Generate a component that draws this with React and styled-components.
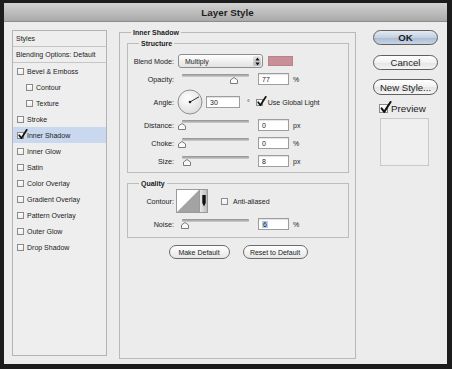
import React from 'react';
import styled, { createGlobalStyle } from 'styled-components';

const GlobalStyle = createGlobalStyle`
  html, body {
    margin: 0;
    padding: 0;
    background: #1c1c1c;
    overflow: hidden;
  }
  body {
    font-family: "Liberation Sans", Arial, sans-serif;
    color: #222;
  }
`;

const styleItems = [
    { name: 'Bevel & Emboss' },
    { name: 'Contour', indent: true },
    { name: 'Texture', indent: true },
    { name: 'Stroke' },
    { name: 'Inner Shadow', checked: true, active: true },
    { name: 'Inner Glow' },
    { name: 'Satin' },
    { name: 'Color Overlay' },
    { name: 'Gradient Overlay' },
    { name: 'Pattern Overlay' },
    { name: 'Outer Glow' },
    { name: 'Drop Shadow' },
];

function Check({ checked, size = 7 }) {
    return (
        <CheckBox $size={size}>
            {checked && (
                <svg width={size + 4} height={size + 4} viewBox="0 0 11 11">
                    <path d="M2.2 6.2 L4.4 9.2 L9.8 0.8" fill="none" stroke="#111" strokeWidth="1.7" strokeLinecap="round" strokeLinejoin="round" />
                </svg>
            )}
        </CheckBox>
    );
}

function Slider({ value }) {
    return (
        <SliderBox>
            <Track />
            <Thumb style={{ left: `${value * 67}px` }} width="8" height="7" viewBox="0 0 8 7">
                <path d="M0.5 6.5 L0.5 3 L4 0.5 L7.5 3 L7.5 6.5 Z" fill="#fafafa" stroke="#7a7a7a" strokeWidth="1" />
            </Thumb>
        </SliderBox>
    );
}

function SliderRow({ label, value, text, unit, mt, selected }) {
    return (
        <Row $h={16} $mt={mt}>
            <Label>{label}</Label>
            <Slider value={value} />
            <Field $w={31}>{selected ? <Selected>{text}</Selected> : text}</Field>
            <Unit>{unit}</Unit>
        </Row>
    );
}

class App extends React.Component {
    render() {
        return (
            <Frame>
                <GlobalStyle />
                <Window>
                    <TitleBar>Layer Style</TitleBar>
                    <Body>
                        <StyleList>
                            <ListItem $header>Styles</ListItem>
                            <ListItem $header>Blending Options: Default</ListItem>
                            {styleItems.map(item => (
                                <ListItem key={item.name} $indent={item.indent} $active={item.active} $box>
                                    <Check checked={item.checked} />
                                    {item.name}
                                </ListItem>
                            ))}
                        </StyleList>

                        <MainGroup>
                            <Legend $offset={4}>Inner Shadow</Legend>
                            <SubGroup $mt={2}>
                                <Legend $offset={11}>Structure</Legend>
                                <Rows $pt={5} $pb={3}>
                                    <Row $h={16}>
                                        <Label>Blend Mode:</Label>
                                        <Select>
                                            Multiply
                                            <Stepper>
                                                <svg width="5" height="9" viewBox="0 0 5 9">
                                                    <path d="M2.5 0.5 L4.6 3.4 L0.4 3.4 Z M2.5 8.5 L4.6 5.6 L0.4 5.6 Z" fill="#111" />
                                                </svg>
                                            </Stepper>
                                        </Select>
                                        <Swatch />
                                    </Row>
                                    <SliderRow label="Opacity:" value={0.77} text="77" unit="%" mt={2} />
                                    <Row $h={28} $mt={1}>
                                        <Label>Angle:</Label>
                                        <Dial width="26" height="26" viewBox="0 0 26 26">
                                            <defs>
                                                <radialGradient id="dialFill" cx="40%" cy="35%" r="70%">
                                                    <stop offset="0" stopColor="#ffffff" />
                                                    <stop offset="1" stopColor="#dcdcdc" />
                                                </radialGradient>
                                            </defs>
                                            <circle cx="13" cy="13" r="12" fill="url(#dialFill)" stroke="#8e8e8e" strokeWidth="1" />
                                            <line x1="13" y1="13" x2="22" y2="7.8" stroke="#333" strokeWidth="1" />
                                            <circle cx="13" cy="13" r="1.3" fill="#222" />
                                        </Dial>
                                        <Field $w={34}>30</Field>
                                        <Degree>°</Degree>
                                        <Check checked />
                                        <CheckText>Use Global Light</CheckText>
                                    </Row>
                                    <SliderRow label="Distance:" value={0} text="0" unit="px" mt={1} />
                                    <SliderRow label="Choke:" value={0} text="0" unit="%" mt={2} />
                                    <SliderRow label="Size:" value={0.07} text="8" unit="px" mt={2} />
                                </Rows>
                            </SubGroup>

                            <SubGroup $mt={6}>
                                <Legend $offset={11}>Quality</Legend>
                                <Rows $pt={2} $pb={5}>
                                    <Row $h={22}>
                                        <Label>Contour:</Label>
                                        <ContourPicker>
                                            <svg width="22" height="22" viewBox="0 0 22 22">
                                                <rect x="0" y="0" width="22" height="22" fill="#fff" />
                                                <path d="M0 22 L22 0 L22 22 Z" fill="#a3a3a3" />
                                            </svg>
                                            <ContourArrow>
                                                <svg width="4" height="12" viewBox="0 0 4 12">
                                                    <path d="M0.3 0 L3.7 0 L3.7 8 L2 11.5 L0.3 8 Z" fill="#111" />
                                                </svg>
                                            </ContourArrow>
                                        </ContourPicker>
                                        <Check />
                                        <CheckText>Anti-aliased</CheckText>
                                    </Row>
                                    <SliderRow label="Noise:" value={0.05} text="6" unit="%" mt={4} selected />
                                </Rows>
                            </SubGroup>

                            <ButtonRow>
                                <PillButton $w={61}>Make Default</PillButton>
                                <PillButton $w={65}>Reset to Default</PillButton>
                            </ButtonRow>
                        </MainGroup>

                        <Side>
                            <DialogButton $primary>OK</DialogButton>
                            <DialogButton $mt={10}>Cancel</DialogButton>
                            <DialogButton $mt={9} $h={16}>New Style...</DialogButton>
                            <PreviewRow>
                                <Check checked size={9} />
                                Preview
                            </PreviewRow>
                            <PreviewBox />
                        </Side>
                    </Body>
                </Window>
            </Frame>
        );
    }
}

export default App;

const Frame = styled.div`
width: 452px;
height: 369px;
box-sizing: border-box;
padding: 3px 5px 5px 4px;
background: #1c1c1c;
`;

const Window = styled.div`
height: 100%;
display: flex;
flex-direction: column;
background: #ececec;
`;

const TitleBar = styled.div`
height: 19px;
flex: none;
box-sizing: border-box;
display: flex;
align-items: center;
justify-content: center;
padding-left: 4px;
background: linear-gradient(#d2d2d2, #a9a9a9);
border-bottom: 1px solid #8c8c8c;
font-weight: bold;
font-size: 9.8px;
color: #1e1e1e;
`;

const Body = styled.div`
flex: 1;
display: flex;
align-items: flex-start;
padding: 8px 9px 0 8px;
`;

const StyleList = styled.div`
width: 95px;
height: 326px;
flex: none;
box-sizing: border-box;
border: 1px solid #b3b3b3;
background: #eeeeee;
`;

const ListItem = styled.div`
height: 16px;
box-sizing: border-box;
display: flex;
align-items: center;
gap: 3px;
padding-left: ${p => p.$indent ? 13 : p.$box ? 4 : 3}px;
background: ${p => p.$active ? '#c9d8ee' : 'transparent'};
border-bottom: ${p => p.$header ? '1px solid #c6c6c6' : 'none'};
font-size: 7px;
color: #222;
white-space: nowrap;
`;

const CheckBox = styled.span`
position: relative;
flex: none;
width: ${p => p.$size}px;
height: ${p => p.$size}px;
box-sizing: border-box;
border: 1px solid #8a8a8a;
background: linear-gradient(#ffffff, #ececec);

svg {
    position: absolute;
    left: -1px;
    top: -4px;
    overflow: visible;
}
`;

const MainGroup = styled.fieldset`
width: 237px;
height: 331px;
margin: -2px 0 0 12px;
padding: 0 6px 0 7px;
min-width: 0;
box-sizing: border-box;
border: 1px solid #b9b9b9;
display: flex;
flex-direction: column;
flex: none;
`;

const SubGroup = styled.fieldset`
margin: ${p => p.$mt}px 0 0 0;
padding: 0;
min-width: 0;
border: 1px solid #bcbcbc;
`;

const Legend = styled.legend`
font-weight: bold;
font-size: 7px;
line-height: 9px;
padding: 0 2px;
margin-left: ${p => p.$offset}px;
color: #222;
`;

const Rows = styled.div`
display: flex;
flex-direction: column;
padding: ${p => p.$pt}px 0 ${p => p.$pb}px 0;
`;

const Row = styled.div`
display: flex;
align-items: center;
height: ${p => p.$h}px;
margin-top: ${p => p.$mt || 0}px;
font-size: 7px;
`;

const Label = styled.span`
width: 46px;
margin-right: 4px;
flex: none;
text-align: right;
font-size: 7.2px;
color: #222;
`;

const Select = styled.div`
width: 85px;
height: 14px;
box-sizing: border-box;
display: flex;
align-items: center;
justify-content: space-between;
padding-left: 6px;
border: 1px solid #8e8e8e;
border-radius: 3px;
background: linear-gradient(#ffffff, #e2e2e2);
font-size: 7px;
`;

const Stepper = styled.span`
width: 8px;
height: 10px;
margin-right: 1px;
display: flex;
align-items: center;
justify-content: center;
border-radius: 2px;
background: linear-gradient(#e6e6e6, #b9b9b9);
`;

const Swatch = styled.span`
width: 25px;
height: 10px;
margin-left: 5px;
background: #c98f99;
border: 1px solid #b8828b;
box-sizing: border-box;
`;

const SliderBox = styled.div`
position: relative;
width: 80px;
height: 100%;
flex: none;
`;

const Track = styled.div`
position: absolute;
left: 4px;
right: 9px;
top: 3px;
height: 3px;
border-radius: 1px;
background: linear-gradient(#8f8f8f, #cfcfcf);
`;

const Thumb = styled.svg`
position: absolute;
top: 6px;
`;

const Field = styled.span`
width: ${p => p.$w}px;
height: 12px;
flex: none;
box-sizing: border-box;
display: flex;
align-items: center;
padding-left: 3px;
border: 1px solid #9d9d9d;
background: #fff;
box-shadow: inset 0 1px 1px rgba(0, 0, 0, 0.12);
font-size: 7px;
`;

const Selected = styled.span`
background: #b7cdee;
padding: 0 1px;
`;

const Unit = styled.span`
margin-left: 4px;
font-size: 7px;
`;

const Dial = styled.svg`
flex: none;
margin-left: -1px;
margin-right: 3px;
`;

const Degree = styled.span`
margin: 0 6px 0 7px;
font-size: 7px;
`;

const CheckText = styled.span`
margin-left: 5px;
font-size: 7px;
`;

const ContourPicker = styled.div`
display: flex;
margin-left: -2px;
margin-right: 13px;
border: 1px solid #9a9a9a;
`;

const ContourArrow = styled.span`
width: 7px;
display: flex;
align-items: center;
justify-content: center;
background: linear-gradient(90deg, #e8e8e8, #bdbdbd);
border-left: 1px solid #9a9a9a;
`;

const ButtonRow = styled.div`
display: flex;
justify-content: center;
gap: 13px;
margin-top: 7px;
`;

const PillButton = styled.div`
width: ${p => p.$w}px;
height: 14px;
box-sizing: border-box;
display: flex;
align-items: center;
justify-content: center;
border: 1px solid #6c6c6c;
border-radius: 7px;
background: linear-gradient(#ffffff, #e6e6e6);
font-size: 7px;
color: #222;
`;

const Side = styled.div`
width: 65px;
flex: none;
margin-left: 17px;
display: flex;
flex-direction: column;
`;

const DialogButton = styled.div`
height: ${p => p.$h || 15}px;
margin-top: ${p => p.$mt || 0}px;
box-sizing: border-box;
display: flex;
align-items: center;
justify-content: center;
border: 1px solid #5f5f5f;
border-radius: 8px;
background: ${p => p.$primary
        ? 'linear-gradient(#e3eaf3 0%, #c3d0e1 50%, #a9bbd2 51%, #c6d4e5 100%)'
        : 'linear-gradient(#ffffff 0%, #f1f1f1 50%, #e4e4e4 51%, #f4f4f4 100%)'};
font-size: 9.6px;
font-weight: ${p => p.$primary ? 'bold' : 'normal'};
color: #1c1c1c;
`;

const PreviewRow = styled.div`
display: flex;
align-items: center;
gap: 3px;
height: 10px;
margin-top: 8px;
padding-left: 6px;
font-size: 9.8px;
`;

const PreviewBox = styled.div`
width: 49px;
height: 48px;
margin: 5px 0 0 7px;
box-sizing: border-box;
border: 1px solid #c9c9c9;
background: #efefef;
`;
